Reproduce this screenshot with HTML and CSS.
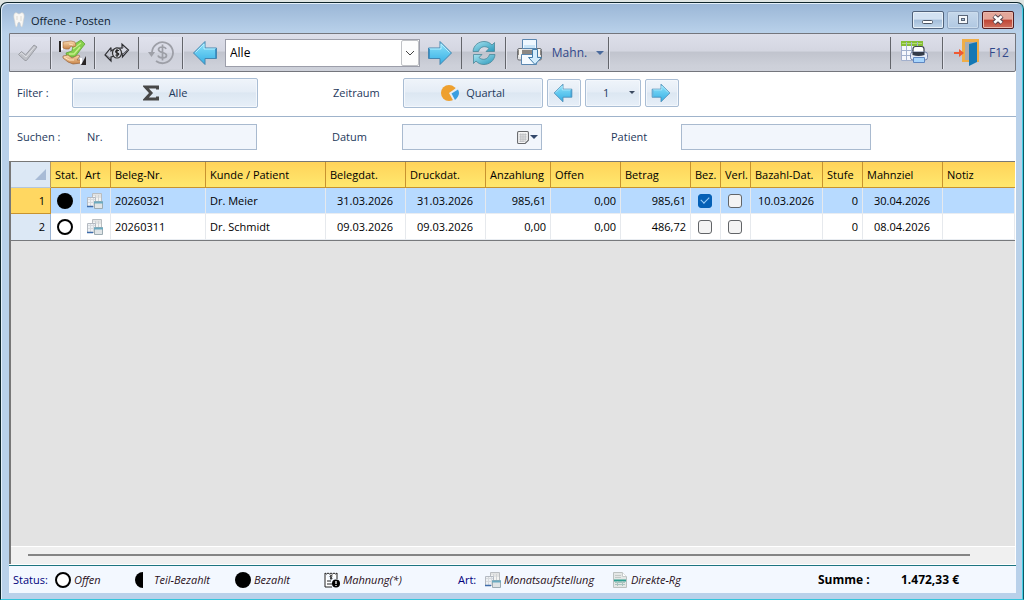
FILE: index.html
```html
<!DOCTYPE html>
<html lang="de">
<head>
<meta charset="utf-8">
<title>Offene - Posten</title>
<link rel="stylesheet" href="styles.css">
</head>
<body>
<svg class="defs" aria-hidden="true">
  <defs>
    <linearGradient id="blue" x1="0" y1="0" x2="0" y2="1"><stop offset="0" stop-color="#8fe4fb"/><stop offset="1" stop-color="#35aee4"/></linearGradient>
    <linearGradient id="teal" x1="0" y1="0" x2="1" y2="1"><stop offset="0" stop-color="#a9e4f0"/><stop offset="1" stop-color="#2a98bb"/></linearGradient>
    <linearGradient id="skin" x1="0" y1="0" x2="0" y2="1"><stop offset="0" stop-color="#fbdcb2"/><stop offset="1" stop-color="#c98549"/></linearGradient>
    <symbol id="arrow-left" viewBox="0 0 26 26"><path d="M1.500 13 13 1.500V8h11.500v10.500H13V24.500z" fill="url(#blue)" stroke="#4586b0"/><path d="M3.500 12.500 12 4v5h11.500" fill="none" stroke="#b6eeff"/><path d="M23.500 9v9" stroke="#3b93c8"/></symbol>
    <symbol id="arrow-right" viewBox="0 0 26 26"><path d="M24.500 13 13 1.500V8H1.500v10.500H13V24.500z" fill="url(#blue)" stroke="#4586b0"/><path d="M2.500 18V9H14V4l8.500 8.500" fill="none" stroke="#b6eeff"/><path d="M2.500 9v9" stroke="#3b93c8"/></symbol>
    <symbol id="windows" viewBox="0 0 16 16"><path d="M5.500.500h9v9h-9z" fill="#f4f4f2" stroke="#b9bdc0"/><path d="M6 2h8M8 4h6M8.500 2v7M11.500 2v7" stroke="#d0d3d5"/><path d="M.500 4.500h8v9h-8z" fill="#eef1f4" stroke="#b4bac2"/><path d="M1 6.500h7M1 9.500h7M3.500 5v8M6.500 5v8" stroke="#d6dade"/><path d="M0 13.500h6" stroke="#3e6cab" stroke-width="1.500"/><path d="M7.500 8.500h8v7h-8z" fill="#dfe4e6" stroke="#9cabb2"/><path d="M7 9.500h9" stroke="#6aaac0" stroke-width="2"/></symbol>
  </defs>
</svg>
<div class="window">
  <header class="titlebar">
    <svg class="tooth" viewBox="0 0 12 16"><path d="M2 1C4 0 5 2 6 2s2-2 4-1c2 2 1 5 .300 8-.300 2-.500 5-1.500 6-1.500 0-1-5-2.800-5s-1.300 5-2.800 5c-1-1-1.200-4-1.500-6C1 6 0 3 2 1z" fill="#f8f7f4" stroke="#d4d2ce" stroke-width=".6"/><path d="M4 4v4M8 4v5" stroke="#dedbd5"/></svg>
    <h1 class="title">Offene - Posten</h1>
    <button class="wbtn" aria-label="Minimieren"><svg viewBox="0 0 30 16"><rect x="9.500" y="8.500" width="10" height="3" rx="1" fill="#fff" stroke="#4c5563"/></svg></button>
    <button class="wbtn wbtn-max" aria-label="Maximieren"><svg viewBox="0 0 30 16"><rect x="10.500" y="3.500" width="9" height="8" fill="#f5f8fb" stroke="#596577"/><rect x="13.500" y="6.500" width="3" height="2" fill="#a9bfd8" stroke="#596577"/></svg></button>
    <button class="wbtn wbtn-close" aria-label="Schließen"><svg viewBox="0 0 30 16"><path d="M11 4l8 7M19 4l-8 7" stroke="#50414b" stroke-width="4.600"/><path d="M11.300 4.300l7.400 6.400M18.700 4.300l-7.400 6.400" stroke="#fff" stroke-width="2.600"/></svg></button>
  </header>

  <main class="client">
    <div class="toolbar" role="toolbar" aria-label="Werkzeuge">
      <button class="tool first lit" aria-label="Übernehmen" disabled><svg class="i22" viewBox="0 0 22 22"><path d="M1.500 12.500l3-3 4 3.500L17 3l3 2L9.500 18.500H8z" fill="#bfc1c7" stroke="#9b9da4"/><path d="M3 12.500l1.500-1.500 4.500 4L17.500 5" fill="none" stroke="#dfe0e5"/></svg></button>
      <button class="tool" aria-label="Bezahlen"><svg class="i27" viewBox="0 0 27 27"><path d="M14 6l8-5 4 4-4 5-6 8H8l-1-4 6-2z" fill="#86cf4c" stroke="#559e2b" stroke-width=".7"/><path d="M14 10l8-6M10 15h5l6-7" fill="none" stroke="#c5ee88" stroke-width="1.500"/><path d="M0 2h2v11H0z" fill="#272321"/><path d="M2 3h2v8H2z" fill="#fff"/><path d="M4 3l8-1 4 1 1 4-3 1-2-1-2 3H7l-3-1z" fill="url(#skin)" stroke="#a26835" stroke-width=".6"/><path d="M4 17l5-1 4 3 6-3 2 1-3 4 4 0v3l-8 1-5-2-5-4z" fill="url(#skin)" stroke="#8d562b" stroke-width=".6"/><path d="M5 18l5 3h5M10 5l4 1" fill="none" stroke="#ffe3bd"/><path d="M21 19h2v6h-2z" fill="#fff"/><path d="M27 17v9h-5z" fill="#292526"/></svg></button>
      <button class="tool" aria-label="Umbuchen"><svg class="i26" viewBox="0 0 26 20"><path d="M7 4.500 1 12l6 6v-4l4-1M7 4.500V8l5-3h6V1l6.500 6-6 7v-3l-4 2" fill="none" stroke="#2d2e32" stroke-width="1.200"/><path d="M7 16l-5-4M19 3v2l-6 1M18 12l5-5" fill="none" stroke="#505157" stroke-width=".8"/><ellipse cx="13" cy="10" rx="4.500" ry="5" fill="#d2d4dd" stroke="#333" stroke-width="1.200"/><path d="M15 7.500c-4-1-4 2-2 2.500 3 .500 2 3-1.500 2M13 6v8" fill="none" stroke="#222" stroke-width="1.200"/></svg></button>
      <button class="tool lit" aria-label="Rückerstattung" disabled><svg class="i26" viewBox="0 0 26 26"><path d="M4 12A10.500 10.500 0 1 1 8 21" fill="none" stroke="#9d9fa7" stroke-width="1.800"/><path d="M0 12h7l-3.500 5z" fill="#9d9fa7"/><path d="M18 9c-1-3-7.500-2.500-7.500 .500 0 4 8 2 8 6 0 3-7.500 3.500-8.500 0M14.500 4.500v16" fill="none" stroke="#9d9fa7" stroke-width="1.700"/></svg></button>
      <div class="nav">
        <button class="plain" aria-label="Zurück"><svg class="i26"><use href="#arrow-left"/></svg></button>
        <div class="combo">
          <select class="combo-select" aria-label="Auswahl"><option>Alle</option></select>
          <span class="combo-arrow"><svg viewBox="0 0 10 6"><path d="M1 1l4 4 4-4" fill="none" stroke="#444"/></svg></span>
        </div>
        <button class="plain" aria-label="Vor"><svg class="i26"><use href="#arrow-right"/></svg></button>
      </div>
      <button class="tool" aria-label="Aktualisieren"><svg class="i26" viewBox="0 0 26 26"><path d="M2 11.500C2.500 5 8 1.500 13 1.500c4 0 6 1.500 8 3.500l2.500-2.500v9H15l3-3c-3-3-9-2.500-10.500 3z" fill="url(#teal)" stroke="#4a8798" stroke-width=".8"/><path d="M24 14.500C23.500 21 18 24.500 13 24.500c-4 0-6-1.500-8-3.500l-2.500 2.500v-9H11l-3 3c3 3 9 2.500 10.500-3z" fill="url(#teal)" stroke="#4a8798" stroke-width=".8"/></svg></button>
      <button class="tool mahn"><svg class="i27" viewBox="0 0 27 27"><path d="M3 9.500h21q1.500 0 1.500 2v8q0 1.500-1.500 1.500H3q-1.500 0-1.500-1.500v-8q0-2 1.500-2z" fill="#e3e4e6" stroke="#6c6f74"/><path d="M2 11h23v5H2z" fill="#8b8782"/><path d="M3 10h3v8H3zM21 10h3v7h-3z" fill="#f7f5ef"/><path d="M6.500.500h14v9h-14z" fill="#eef7ff" stroke="#5b87b0"/><path d="M8 6h11v3H8z" fill="#c9e4f7"/><path d="M5.500 15.500h15v10h-15z" fill="#f4faff" stroke="#5b87b0"/><path d="M16.500 10.500h5v8h4L19 25.500l-6.500-7h4z" fill="#d3edfd" stroke="#427daa"/></svg><span>Mahn.</span><i class="tri"></i></button>
      <div class="spacer"></div>
      <button class="tool print" aria-label="Liste drucken"><svg class="i28" viewBox="0 0 28 24"><path d="M.500.500h21v19H.500z" fill="#f5f8fc" stroke="#a3b0cc"/><path d="M0 0h22v5H0z" fill="#86bf35"/><path d="M1 2.500h20" stroke="#b4dc74"/><path d="M1 9.500h20M1 14.500h20M5.500 1v18M10.500 1v18M16.500 1v9" stroke="#a2b2ce"/><path d="M12 12V8q0-2.500 2.500-2.500h6Q23 5.500 23 8v4z" fill="#fff" stroke="#3d434d" stroke-width="1.200"/><rect x="9.500" y="11" width="17" height="8" rx="2.500" fill="#e3e9f5" stroke="#7484ab"/><path d="M11.500 11h12v3q-6 2-12 0z" fill="#333b49"/><path d="M12.500 16.500h11v5h-11z" fill="#a8d5fc" stroke="#5f86c0"/></svg></button>
      <button class="tool exit"><svg class="i27" viewBox="0 0 27 27"><path d="M9 0h17v23H9z" fill="#efae48"/><path d="M12 3h11v18H12z" fill="#a9acb1"/><path d="M16 5l8-2v20l-8 4z" fill="#1478b4"/><path d="M1 14h6" stroke="#ef5933" stroke-width="2"/><path d="M6 10l5 4-5 4z" fill="#ef5933"/></svg><span>F12</span></button>
    </div>

    <section class="bar filter">
      <span class="label">Filter :</span>
      <button class="btn sum"><svg class="i16" viewBox="0 0 16 16"><path d="M14.500 4.500V2H2.500L8 8l-5.500 6h12V11.500" fill="none" stroke="#484848" stroke-width="3"/></svg>Alle</button>
      <span class="label zeit">Zeitraum</span>
      <div class="group">
        <button class="btn quartal"><svg class="i18" viewBox="0 0 18 18"><circle cx="8" cy="9" r="8" fill="#eea02f"/><path d="M8 9 18 2v16h-5z" fill="#e6eef6"/><path d="M10.500 9.500 17 5.500Q20 11 14 16z" fill="#3b9fe0"/></svg>Quartal</button>
        <button class="btn step" aria-label="Vorheriges Quartal"><svg class="i20"><use href="#arrow-left"/></svg></button>
        <div class="num"><select class="btn num-select" aria-label="Quartal"><option>1</option></select><i class="tri tri-small"></i></div>
        <button class="btn step" aria-label="Nächstes Quartal"><svg class="i20"><use href="#arrow-right"/></svg></button>
      </div>
    </section>

    <section class="bar search">
      <span class="label">Suchen :</span>
      <label class="label" for="nr">Nr.</label>
      <input class="field" id="nr" type="text">
      <label class="label datum" for="datum">Datum</label>
      <div class="date">
        <input class="field" id="datum" type="text">
        <button class="date-btn" aria-label="Kalender"><svg class="cal" viewBox="0 0 11 12"><path d="M1.500.500h8q1 0 1 1v7l-3 3h-6q-1 0-1-1v-9q0-1 1-1z" fill="#f6f6f6" stroke="#66686c"/><path d="M2 3.500h7M2 5.500h7M2 7.500h7M2 9.500h5M3.500 2v8M5.500 2v8M7.500 2v8" stroke="#b0b2b6" stroke-width=".7"/></svg><i class="tri tri-dark"></i></button>
      </div>
      <label class="label patient" for="patient">Patient</label>
      <input class="field" id="patient" type="text">
    </section>

    <section class="grid">
      <table class="table">
        <colgroup><col class="w40"><col class="w30"><col class="w30"><col class="w95"><col class="w120"><col class="w80"><col class="w80"><col class="w65"><col class="w70"><col class="w70"><col class="w30"><col class="w30"><col class="w72"><col class="w40"><col class="w80"><col></colgroup>
        <thead><tr><th class="corner"><svg class="cornertri" viewBox="0 0 10 10"><path d="M10 0v10H0z" fill="#a8bbd6"/></svg></th><th>Stat.</th><th>Art</th><th>Beleg-Nr.</th><th>Kunde / Patient</th><th>Belegdat.</th><th>Druckdat.</th><th>Anzahlung</th><th>Offen</th><th>Betrag</th><th>Bez.</th><th>Verl.</th><th>Bazahl-Dat.</th><th>Stufe</th><th>Mahnziel</th><th>Notiz</th></tr></thead>
        <tbody>
          <tr class="selected"><th class="r">1</th><td class="c"><svg class="i16"><circle cx="8" cy="8" r="8"/></svg></td><td class="c"><svg class="i16"><use href="#windows"/></svg></td><td>20260321</td><td>Dr. Meier</td><td class="c">31.03.2026</td><td class="c">31.03.2026</td><td class="r">985,61</td><td class="r">0,00</td><td class="r">985,61</td><td class="c"><input class="check" type="checkbox" aria-label="Bezahlt 1" checked></td><td class="c"><input class="check" type="checkbox" aria-label="Verlust 1"></td><td class="c">10.03.2026</td><td class="r">0</td><td class="c">30.04.2026</td><td></td></tr>
          <tr><th class="r">2</th><td class="c"><svg class="i16"><circle cx="8" cy="8" r="7" fill="#fff" stroke="#000" stroke-width="2"/></svg></td><td class="c"><svg class="i16"><use href="#windows"/></svg></td><td>20260311</td><td>Dr. Schmidt</td><td class="c">09.03.2026</td><td class="c">09.03.2026</td><td class="r">0,00</td><td class="r">0,00</td><td class="r">486,72</td><td class="c"><input class="check" type="checkbox" aria-label="Bezahlt 2"></td><td class="c"><input class="check" type="checkbox" aria-label="Verlust 2"></td><td></td><td class="r">0</td><td class="c">08.04.2026</td><td></td></tr>
        </tbody>
      </table>
      <div class="hscroll"><div class="thumb"></div></div>
    </section>

    <footer class="status">
      <span class="key">Status:</span>
      <span class="item offen"><svg class="i16"><circle cx="8" cy="8" r="7" fill="#fff" stroke="#000" stroke-width="2"/></svg>Offen</span>
      <span class="item teil"><svg class="i16"><path d="M8 0a8 8 0 0 0 0 16z"/></svg>Teil-Bezahlt</span>
      <span class="item bez"><svg class="i16"><circle cx="8" cy="8" r="8"/></svg>Bezahlt</span>
      <span class="item mahnung"><svg class="i16" viewBox="0 0 16 16"><path d="M1 1l1.500 1L4 1l1.500 1L7 1l1.500 1L10 1l1.500 1L13 1v6M1 1v14h7" fill="#fff" stroke="#222"/><path d="M3 9h4M3 12h5" stroke="#222" stroke-width="1.200"/><path d="M8.500 4c-3-1-3 1-1.500 1.500 2 .500 1 2-1 1M7 2.500v5" fill="none" stroke="#222"/><circle cx="12" cy="11.500" r="4" fill="#000"/><path d="M12 9v3M12 13v1" stroke="#fff" stroke-width="1.300"/></svg>Mahnung(*)</span>
      <span class="key art">Art:</span>
      <span class="item monat"><svg class="i16"><use href="#windows"/></svg>Monatsaufstellung</span>
      <span class="item"><svg class="i16" viewBox="0 0 16 16"><path d="M1.500.500h9l4 4v11h-13z" fill="#e4e7e6" stroke="#bbc1c0"/><path d="M10.500.500v4h4" fill="#fff" stroke="#c5caca"/><path d="M3 3.500h6M3 5.500h6" stroke="#c3c9c7"/><path d="M2 8.500h12" stroke="#2e9e91" stroke-width="2"/><path d="M3 10.500h10M3 12.500h10M5.500 9v5M10.500 9v5" stroke="#a9c4bf"/></svg>Direkte-Rg</span>
      <span class="spacer"></span>
      <strong class="sumlabel">Summe :</strong>
      <strong class="total">1.472,33 €</strong>
    </footer>
  </main>
</div>
</body>
</html>
```
FILE: styles.css
```css
* { box-sizing: border-box; }
html, body { height: 100%; margin: 0; }
body, button, input, select { font-family: "Open Sans", "Noto Sans", sans-serif; font-size: 11px; }
body { background: #dfe5e3; padding-top: 2px; color: #000; }
button { padding: 0; border: 0; background: none; color: inherit; }
svg { display: block; flex: none; }
.defs { position: absolute; width: 0; height: 0; }
.i16 { width: 16px; height: 16px; }
.i18 { width: 18px; height: 18px; }
.i20 { width: 20px; height: 20px; }
.i22 { width: 22px; height: 22px; }
.i26 { width: 26px; height: 26px; }
.i27 { width: 27px; height: 27px; }
.i28 { width: 28px; height: 24px; }
.spacer { flex: 1; }

.window {
  height: 100%;
  display: flex;
  flex-direction: column;
  padding: 0 7px 6px;
  border: 1px solid #10262c;
  border-bottom: 1px solid #34c5dc;
  border-right-color: #0c5868;
  border-radius: 7px 7px 0 0;
  background: linear-gradient(#9ab6d6, #b9d1ea 30px);
  box-shadow: inset 1px 1px #e4f0fa, inset -1px 0 #45cfe4;
}
.titlebar { height: 30px; flex: none; display: flex; align-items: center; gap: 3px; padding: 4px 2px 0 5px; }
.tooth { width: 12px; height: 16px; margin-right: 3px; }
.title { flex: 1; margin: 0; font-size: 11px; font-weight: 400; color: #0e1c30; }
.wbtn { width: 32px; height: 18px; border: 1px solid #50627b; border-radius: 2px; background: linear-gradient(#d3e2f2 45%, #a3bdd9 50%, #c1d6ea); box-shadow: inset 0 0 0 1px #e7f0f8; }
.wbtn svg { width: 30px; height: 16px; }
.wbtn-max { border-color: #8fa5c1; background: linear-gradient(#c6d8eb, #b0c8e2); box-shadow: inset 0 0 0 1px #cbdced; }
.wbtn-close { border-color: #521f22; background: linear-gradient(#e4a79a 45%, #c04534 50%, #cf7160); box-shadow: inset 0 0 0 1px #eab8ac; }

.client { flex: 1; min-height: 0; display: flex; flex-direction: column; background: #fff; margin-left: 1px; }

.toolbar {
  height: 39px; flex: none; display: flex; align-items: center;
  border: 1px solid #74767d; border-radius: 0 0 2px;
  background: linear-gradient(#dddfea, #d4d6e1 45%, #c1c4ce 50%, #cdd0d9 85%, #ced1da);
}
.tool { width: 44px; height: 32px; display: flex; align-items: center; justify-content: center; border-right: 1px solid #63656b; box-shadow: 1px 0 #e1e3ec; }
.tool.first { width: 41px; padding-right: 4px; }
.lit { background: linear-gradient(#e0e2ed, #d7d9e4 48%, #cdd0da 50%, #d3d5df); }
.nav { width: 279px; height: 32px; display: flex; align-items: center; gap: 7px; padding-left: 9px; border-right: 1px solid #63656b; }
.combo { position: relative; flex: 1; height: 28px; }
.combo-select { width: 100%; height: 100%; padding: 0 4px; border: 1px solid #9c9eaa; border-radius: 0; background: #fff; appearance: none; font-size: 12px; color: #000; }
.combo-arrow { position: absolute; top: 1px; right: 1px; bottom: 1px; width: 18px; display: grid; place-items: center; border: 1px solid #c0c2c6; background: #fdfdfd; border-radius: 2px; pointer-events: none; }
.combo-arrow svg { width: 10px; height: 6px; }
.nav .plain:last-child { margin-right: 8px; }
.tri { width: 0; height: 0; border: 4px solid transparent; border-top-color: #4a6a9c; border-bottom: 0; }
.mahn { width: 103px; gap: 9px; padding-left: 6px; font-size: 12px; color: #31478a; }
.print { width: 53px; padding-right: 4px; border-left: 1px solid #63656b; }
.exit { width: 72px; gap: 9px; padding-left: 4px; border: 0; box-shadow: none; font-size: 12px; color: #31478a; }

.bar { height: 45px; flex: none; display: flex; align-items: center; padding-left: 8px; color: #1e395b; }
.filter { border-bottom: 1px solid #9fb3cb; padding-bottom: 3px; }
.label { width: 55px; flex: none; }
.btn { height: 30px; display: flex; align-items: center; justify-content: center; border: 1px solid #a9bdd4; border-radius: 2px; background: linear-gradient(#eff4fa, #e5edf6 45%, #dce7f2 50%, #e7eff8); color: #1e395b; box-shadow: inset 0 0 0 1px #f3f7fc; }
.sum { width: 186px; gap: 10px; }
.zeit { width: 70px; margin-left: 75px; }
.group { display: flex; align-items: center; gap: 4px; }
.quartal { width: 140px; gap: 7px; }
.step { width: 34px; height: 28px; padding-right: 2px; }
.num { position: relative; width: 56px; }
.num-select { width: 100%; height: 28px; appearance: none; padding: 0 30px 0 17px; }
.tri-small { position: absolute; right: 6px; top: 12px; border-width: 3px; border-bottom: 0; border-top-color: #3c4a60; }
.tri-dark { border-top-color: #33486b; }
.search { height: 44px; padding-bottom: 5px; }
.search .label:nth-child(1) { width: 70px; }
.search .label:nth-child(2) { width: 40px; }
.field { width: 130px; height: 26px; padding: 0 4px; border: 1px solid #a9bacf; background: #f2f6fc; color: #1e395b; }
.search .datum { width: 70px; margin-left: 75px; }
.date { position: relative; width: 140px; height: 26px; }
.date .field { width: 100%; }
.date-btn { position: absolute; right: 4px; top: 7px; display: flex; align-items: center; gap: 1px; }
.cal { width: 12px; height: 13px; }
.search .patient { width: 70px; margin-left: 69px; }
#patient { width: 190px; }

.grid { flex: 1; min-height: 0; display: flex; flex-direction: column; margin-right: 1px; border: 1px solid #777; border-width: 1px 0 0 2px; background: #e3e3e3; }
.table { width: 100%; table-layout: fixed; border-collapse: separate; border-spacing: 0; border-bottom: 1px solid #77797c; }
.w30 { width: 30px; } .w40 { width: 40px; } .w65 { width: 65px; } .w70 { width: 70px; } .w72 { width: 72px; } .w80 { width: 80px; } .w95 { width: 95px; } .w120 { width: 120px; }
.table th, .table td { height: 26px; padding: 0 4px; text-align: left; font-weight: 400; line-height: 16px; white-space: nowrap; }
.table thead th { border-right: 1px solid #c7932f; border-bottom: 1px solid #c7932f; background: linear-gradient(#ffd35a, #ffe86e); }
.table thead th:last-child { border-right: 0; }
.table thead .corner { background: #dce8f5; border-right-color: #b79b63; border-bottom-color: #b4c6dc; }
.cornertri { width: 11px; height: 11px; margin-left: auto; }
.table td { border-right: 1px solid #e6e9ed; border-bottom: 1px solid #e9edf2; background: #fff; }
.table tbody th { background: #dce8f5; border-right: 1px solid #9bb4d3; }
.table tbody .r { text-align: right; }
.table tbody th.r { padding-right: 5px; }
.table tbody .c { text-align: center; padding: 0 1px 0 0; }
.table .c svg { margin: 0 auto; }
.table .selected td { background: #b7daff; }
.table .selected th { background: #ffd761; border-right-color: #c7932f; border-bottom: 1px solid #c7932f; }
.check { display: block; width: 14px; height: 14px; margin: 0 auto; appearance: none; border: 1px solid #616467; border-radius: 3px; background: #f3f3f3; }
.check:checked { border-color: #0560b6; background: #0560b6; display: grid; place-items: center; }
.check:checked::after { content: ""; width: 7px; height: 4px; border: solid #9fd0fa; border-width: 0 0 1px 1px; transform: rotate(-45deg) translate(1px, -1px); }
.hscroll { height: 18px; margin-top: auto; padding: 7px 45px 0 17px; background: #f0f0f0; border-top: 1px solid #fff; }
.thumb { height: 2px; background: #858585; }

.status { height: 28px; flex: none; display: flex; align-items: center; margin-top: 1px; padding-left: 4px; border-top: 1px solid #1d7480; background: #f3f8ff; }
.key { width: 42px; color: #00007c; }
.item { display: flex; align-items: center; gap: 3px; font-style: italic; color: #2a1020; }
.offen { width: 80px; }
.teil { width: 100px; }
.bez { width: 89px; }
.mahnung { width: 134px; }
.art { width: 27px; }
.monat { width: 127px; }
.sumlabel { width: 83px; font-size: 12px; }
.total { width: 115px; font-size: 12px; }
```
